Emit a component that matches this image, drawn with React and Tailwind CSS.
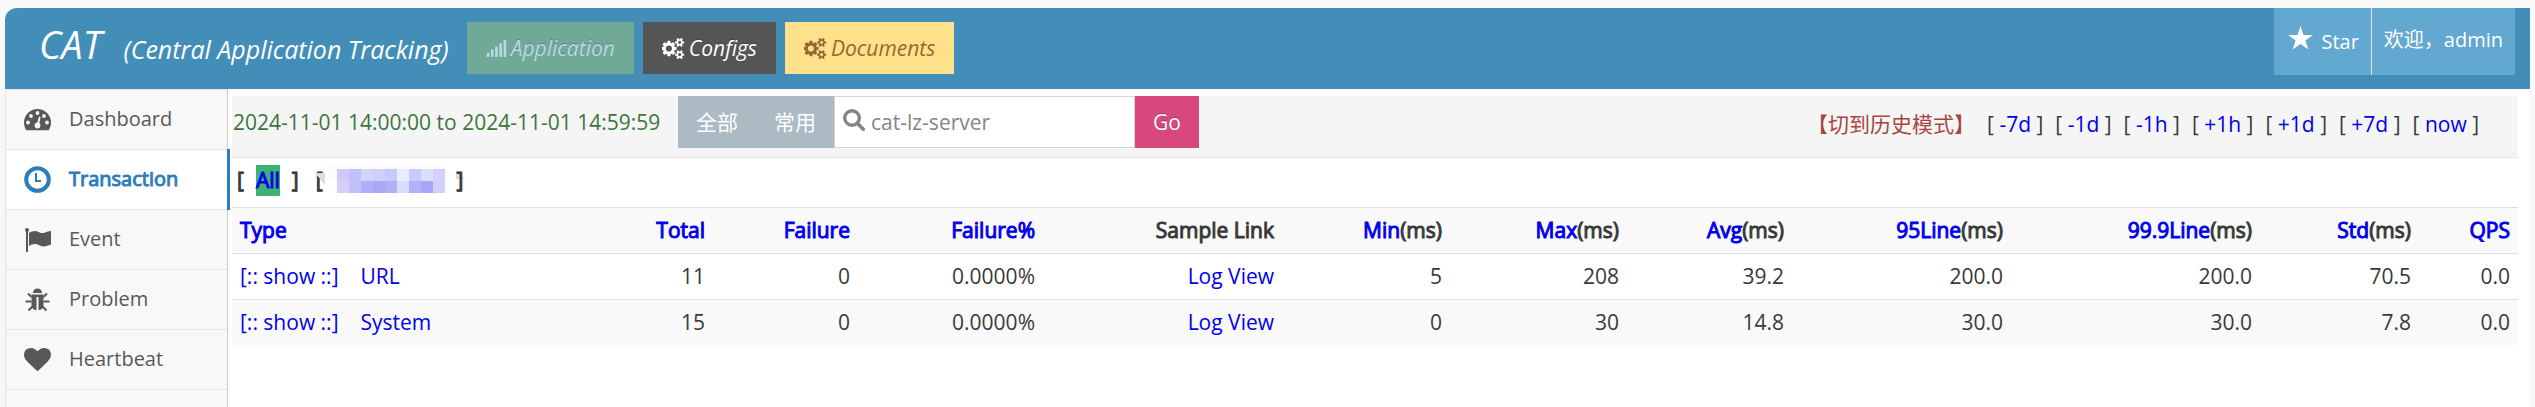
import React, { useState } from "react";
import clsx from "clsx";
import { FaSignal } from "react-icons/fa";

const DashboardIcon = ({ className }) => (
  <svg viewBox="0 0 27 27" className={className}>
    <path
      fill="currentColor"
      d="M13.5 3A13.5 13.5 0 0 0 0 16.500c0 2.700.700 5.100 2 7.200.300.400.600.500 1 .500h21c.400 0 .700-.100 1-.500 1.300-2.100 2-4.500 2-7.200A13.500 13.500 0 0 0 13.500 3z"
    />
    <g className="fill-[#f8f8f8]">
      <circle cx="4" cy="16.500" r="1.900" />
      <circle cx="7" cy="10" r="1.900" />
      <circle cx="13.500" cy="7" r="1.900" />
      <circle cx="20" cy="10" r="1.900" />
      <circle cx="23" cy="16.500" r="1.900" />
      <circle cx="13.500" cy="19.500" r="2.900" />
      <path d="M12.600 19l2.400-8.500 1.600.4-1.800 8.600z" />
    </g>
  </svg>
);

const ClockIcon = ({ className }) => (
  <svg viewBox="0 0 27 27" className={className} fill="none" stroke="currentColor">
    <circle cx="13.500" cy="13.500" r="11.300" strokeWidth="4" />
    <path d="M13 7v8h5" strokeWidth="2" transform="translate(-1 0)" />
  </svg>
);

const FlagIcon = ({ className }) => (
  <svg viewBox="0 0 27 27" className={className} fill="currentColor">
    <circle cx="3" cy="4" r="2" />
    <path d="M2 4h2v22H2z" />
    <path d="M5 7c3-1.800 6-2.600 9-1.200 2.500 1.200 4.500 1.800 7 .800 2-.700 3.500-1.400 6-1.600v13.500c-3 1-5.500 2.300-8 2-3-.300-4.500-2.500-8-2.500-2.300 0-4 .9-6 2z" />
  </svg>
);

const BugIcon = ({ className }) => (
  <svg viewBox="0 0 27 27" className={className} fill="currentColor">
    <path d="M9 7a4.500 4.500 0 0 1 9 0z" />
    <path d="M7.500 8.500h12V19c0 3-2.200 5-5 5V11h-2v13c-2.800 0-5-2-5-5z" />
    <path
      d="M7.500 11L4 7.500M19.500 11L23 7.500M7.500 15.500H1.500M19.500 15.500h6M8.500 20.500L4.500 24.500M18.500 20.500l4 4"
      fill="none"
      stroke="currentColor"
      strokeWidth="2"
    />
  </svg>
);

const HeartIcon = ({ className }) => (
  <svg viewBox="0 0 1792 1792" className={className}>
    <path
      fill="currentColor"
      d="M896 1664q-26 0-44-18l-624-602q-10-8-27.500-26T145 952.500 77 855 23.500 734 0 596q0-220 127-344t351-124q62 0 126.500 21.500t120 58T820 276t76 68q36-36 76-68t95.500-68.500 120-58T1314 128q224 0 351 124t127 344q0 221-229 450l-623 600q-18 18-44 18z"
    />
  </svg>
);

const SearchIcon = ({ className }) => (
  <svg viewBox="0 0 22 22" className={className} fill="none" stroke="currentColor">
    <circle cx="9" cy="9" r="7.300" strokeWidth="3.400" />
    <path d="M14.300 14.300l6 6" strokeWidth="3.600" strokeLinecap="round" />
  </svg>
);

const StarIcon = ({ className }) => (
  <svg viewBox="0 0 25 24" className={className}>
    <path fill="currentColor" d="M12.500 0l3 8.900H25l-7.600 5.600 3 9-7.900-5.600-7.900 5.600 3-9L0 8.900h9.500z" />
  </svg>
);

const CogsIcon = ({ className }) => (
  <svg viewBox="0 0 1920 1792" className={className}>
    <path
      fill="currentColor"
      d="M832 896q0-106-75-181t-181-75-181 75-75 181 75 181 181 75 181-75 75-181zm768 512q0-52-38-90t-90-38-90 38-38 90q0 53 37.500 90.500t90.500 37.500 90.500-37.500 37.500-90.500zm0-1024q0-52-38-90t-90-38-90 38-38 90q0 53 37.500 90.500t90.500 37.500 90.500-37.500 37.500-90.500zm-384 421v185q0 10-7 19.500t-16 10.500l-155 24q-11 35-32 76 34 48 90 115 7 11 7 20 0 12-7 19-23 30-82.500 89.500t-78.500 59.500q-11 0-21-7l-115-90q-37 19-77 31-11 108-23 155-7 24-30 24h-186q-11 0-20-7.500t-10-17.500l-23-153q-34-10-75-31l-118 89q-7 7-20 7-11 0-21-8-144-133-144-160 0-9 7-19 10-14 41-53t47-61q-23-44-35-82l-152-24q-10-1-17-9.500t-7-19.500v-185q0-10 7-19.500t16-10.500l155-24q11-35 32-76-34-48-90-115-7-11-7-20 0-12 7-20 22-30 82-89t79-59q11 0 21 7l115 90q34-18 77-32 11-108 23-154 7-24 30-24h186q11 0 20 7.500t10 17.500l23 153q34 10 75 31l118-89q8-7 20-7 11 0 21 8 144 133 144 160 0 9-7 19-12 16-42 54t-45 60q23 48 34 82l152 23q10 2 17 10.500t7 19.500zm640 533v140q0 16-149 31-12 27-30 52 51 113 51 138 0 4-4 7-122 71-124 71-8 0-46-47t-52-68q-20 2-30 2t-30-2q-14 21-52 68t-46 47q-2 0-124-71-4-3-4-7 0-25 51-138-18-25-30-52-149-15-149-31v-140q0-16 149-31 13-29 30-52-51-113-51-138 0-4 4-7 4-2 35-20t59-34 30-16q8 0 46 46.500t52 67.500q20-2 30-2t30 2q51-71 92-112l6-2q4 0 124 70 4 3 4 7 0 25-51 138 17 23 30 52 149 15 149 31zm0-1024v140q0 16-149 31-12 27-30 52 51 113 51 138 0 4-4 7-122 71-124 71-8 0-46-47t-52-68q-20 2-30 2t-30-2q-14 21-52 68t-46 47q-2 0-124-71-4-3-4-7 0-25 51-138-18-25-30-52-149-15-149-31v-140q0-16 149-31 13-29 30-52-51-113-51-138 0-4 4-7 4-2 35-20t59-34 30-16q8 0 46 46.500t52 67.500q20-2 30-2t30 2q51-71 92-112l6-2q4 0 124 70 4 3 4 7 0 25-51 138 17 23 30 52 149 15 149 31z"
    />
  </svg>
);

const menu = [
  { name: "Dashboard", icon: DashboardIcon },
  { name: "Transaction", icon: ClockIcon },
  { name: "Event", icon: FlagIcon },
  { name: "Problem", icon: BugIcon },
  { name: "Heartbeat", icon: HeartIcon },
];

const columns = [
  { label: "Total", width: "w-[110px]" },
  { label: "Failure", width: "w-[145px]" },
  { label: "Failure%", width: "w-[185px]" },
  { label: "Sample Link", width: "w-[239px]", plain: true },
  { label: "Min", unit: "(ms)", width: "w-[168px]" },
  { label: "Max", unit: "(ms)", width: "w-[177px]" },
  { label: "Avg", unit: "(ms)", width: "w-[165px]" },
  { label: "95Line", unit: "(ms)", width: "w-[219px]" },
  { label: "99.9Line", unit: "(ms)", width: "w-[249px]" },
  { label: "Std", unit: "(ms)", width: "w-[159px]" },
  { label: "QPS", width: "w-[99px]" },
];

const rows = [
  { type: "URL", values: ["11", "0", "0.0000%", "Log View", "5", "208", "39.2", "200.0", "200.0", "70.5", "0.0"] },
  { type: "System", values: ["15", "0", "0.0000%", "Log View", "0", "30", "14.8", "30.0", "30.0", "7.8", "0.0"] },
];

const steps = ["-7d", "-1d", "-1h", "+1h", "+1d", "+7d", "now"];

const Header = () => (
  <header className="flex h-[81px] items-start rounded-tl-xl bg-[#438eb9] text-white">
    <h1 className="flex items-baseline gap-[22px] pl-[34px] italic leading-[72px]">
      <span className="text-[38px]">CAT</span>
      <span className="text-[25px]">(Central Application Tracking)</span>
    </h1>
    <nav className="ml-[18px] mt-[14px] flex gap-[9px] text-[21px] italic leading-[52px]">
      <button className="flex items-center gap-1 bg-[#70aa96] px-[19px] text-[#b8d8e6] [text-shadow:0_-1px_0_rgba(0,0,0,0.25)]">
        <FaSignal className="size-[21px]" />
        Application
      </button>
      <button className="flex items-center gap-1 bg-[#555555] px-[19px] [text-shadow:0_-1px_0_rgba(0,0,0,0.25)]">
        <CogsIcon className="size-[23px]" />
        Configs
      </button>
      <button className="flex items-center gap-1 bg-[#fee188] px-[19px] text-[#996633]">
        <CogsIcon className="size-[23px]" />
        Documents
      </button>
    </nav>
    <div className="ml-auto mr-[15px] flex h-[67px] bg-[#62a8d1] text-[20px] leading-[64px]">
      <a href="#star" className="flex items-center gap-2 border-r border-[#dddddd] pl-[14px] pr-3">
        <StarIcon className="mb-2 h-6 w-[25px]" />
        Star
      </a>
      <a href="#user" className="px-3">
        欢迎，admin
      </a>
    </div>
  </header>
);

const Sidebar = ({ active, onSelect }) => (
  <aside className="w-[223px] shrink-0 border-x border-l-[#e5e5e5] border-r-[#cccccc] bg-[#f8f8f8]">
    <ul>
      {menu.map(({ name, icon: Icon }) => (
        <li key={name} className="relative h-[60px] border-t border-[#e5e5e5]">
          <a
            href={`#${name}`}
            onClick={() => onSelect(name)}
            className={clsx(
              "flex h-full items-center gap-[18px] pl-[18px] text-[20px]",
              active === name ? "bg-white text-[#2b7dbc]" : "text-[#585858]"
            )}
          >
            <Icon className="size-[27px]" />
            <span className={clsx("pb-[2px]", active === name && "[-webkit-text-stroke:1px]")}>{name}</span>
          </a>
          {active === name && (
            <span className="absolute -right-[3px] -top-px h-[61px] w-[3px] bg-[#2b7dbc]" />
          )}
        </li>
      ))}
      <li className="border-t border-[#e5e5e5]" />
    </ul>
  </aside>
);

const Toolbar = () => {
  const [domain, setDomain] = useState("cat-lz-server");

  return (
    <div className="flex h-[62px] items-start border-b border-[#e5e5e5] bg-[#f5f5f5] leading-[52px]">
      <span className="w-[446px] pl-px text-[#3c763d]">2024-11-01 14:00:00 to 2024-11-01 14:59:59</span>
      <div className="flex bg-[#abbac3] text-white [text-shadow:0_-1px_0_rgba(0,0,0,0.25)]">
        <button className="px-[18px]">全部</button>
        <button className="px-[18px]">常用</button>
      </div>
      <label className="flex h-[52px] w-[301px] items-center gap-[6px] border border-[#d5d5d5] bg-white pl-2 text-[#858585]">
        <SearchIcon className="mb-1 size-[22px] shrink-0" />
        <input
          aria-label="domain"
          className="w-full min-w-0 outline-none"
          value={domain}
          onChange={(e) => setDomain(e.target.value)}
        />
      </label>
      <button className="bg-[#d6487e] px-[18px] text-white [text-shadow:0_-1px_0_rgba(0,0,0,0.25)]">Go</button>
      <div className="ml-auto mr-[39px] flex gap-3 leading-[56px]">
        <a href="#history" className="text-[#a94442]">
          【切到历史模式】
        </a>
        {steps.map((step) => (
          <span key={step}>
            [ <a href={`#${step}`} className="text-[#0000ee]">{step}</a> ]
          </span>
        ))}
      </div>
    </div>
  );
};

// masked machine address, two rows of mosaic cells
const mosaic = [
  ["#cdcafa", "#c1c0f9", "#d3d3fb", "#cfcffa", "#c9c8fa", "#e9ebfe", "#cac9fa", "#dbdffd", "#d2d1fb"],
  ["#d5cff8", "#c2c0f8", "#afaef7", "#a9a8f7", "#b1b0f7", "#d9ddfd", "#b2b0f7", "#a7a5f6", "#d0d1fb"],
];

const Machines = () => (
  <div className="flex h-[49px] items-center pb-1 pl-[5px] [-webkit-text-stroke:1px]">
    <span>[</span>
    <a href="#all" className="ml-3 bg-[#3cb371] text-[#0000ee]">All</a>
    <span className="ml-3">]</span>
    <span className="ml-[17px]">[</span>
    <svg width="150" height="32" viewBox="0 0 150 32" className="-ml-2 mb-1" shapeRendering="crispEdges">
      <path d="M0 10h10v12z" fill="#dddddd" />
      <path d="M10 2h115l15 8v8H10z" fill="#fcfcff" />
      {mosaic.map((line, y) =>
        line.map((color, x) => (
          <rect key={`${x}-${y}`} x={22 + x * 12} y={6 + y * 12} width="12" height="12" fill={color} />
        ))
      )}
      <path d="M141 8l8 8h-8z" fill="#dddddd" />
    </svg>
    <span className="-ml-2">]</span>
  </div>
);

const ReportTable = () => (
  <table className="w-full table-fixed border-collapse text-right leading-[29px]">
    <thead>
      <tr className="border-t border-[#dddddd] bg-[#f9f9f9]">
        <th className="p-2 text-left font-normal text-[#0000ee] [-webkit-text-stroke:1px]">
          <a href="#type">Type</a>
        </th>
        {columns.map((col) => (
          <th key={col.label} className={clsx("p-2 font-normal [-webkit-text-stroke:1px]", col.width)}>
            {col.plain ? col.label : <a href={`#${col.label}`} className="text-[#0000ee]">{col.label}</a>}
            {col.unit}
          </th>
        ))}
      </tr>
    </thead>
    <tbody>
      {rows.map((row) => (
        <tr key={row.type} className="border-t border-[#dddddd] even:bg-[#f9f9f9]">
          <td className="p-2 text-left text-[#0000ee]">
            <a href="#show">[:: show ::]</a>
            <a href={`#${row.type}`} className="ml-[22px]">{row.type}</a>
          </td>
          {row.values.map((value, i) => (
            <td key={columns[i].label} className="p-2">
              {columns[i].plain ? <a href="#log" className="text-[#0000ee]">{value}</a> : value}
            </td>
          ))}
        </tr>
      ))}
    </tbody>
  </table>
);

const App = () => {
  const [active, setActive] = useState("Transaction");

  return (
    <div className="flex h-screen flex-col overflow-hidden bg-[#f8f8f8] px-[5px] pt-2 font-['Open_Sans','Noto_Sans_CJK_SC',sans-serif] text-[21px] text-[#393939]">
      <Header />
      <div className="flex grow bg-white">
        <Sidebar active={active} onSelect={setActive} />
        <main className="ml-1 mr-3 grow pt-[7px]">
          <Toolbar />
          <Machines />
          <ReportTable />
        </main>
      </div>
    </div>
  );
};

export default App;
